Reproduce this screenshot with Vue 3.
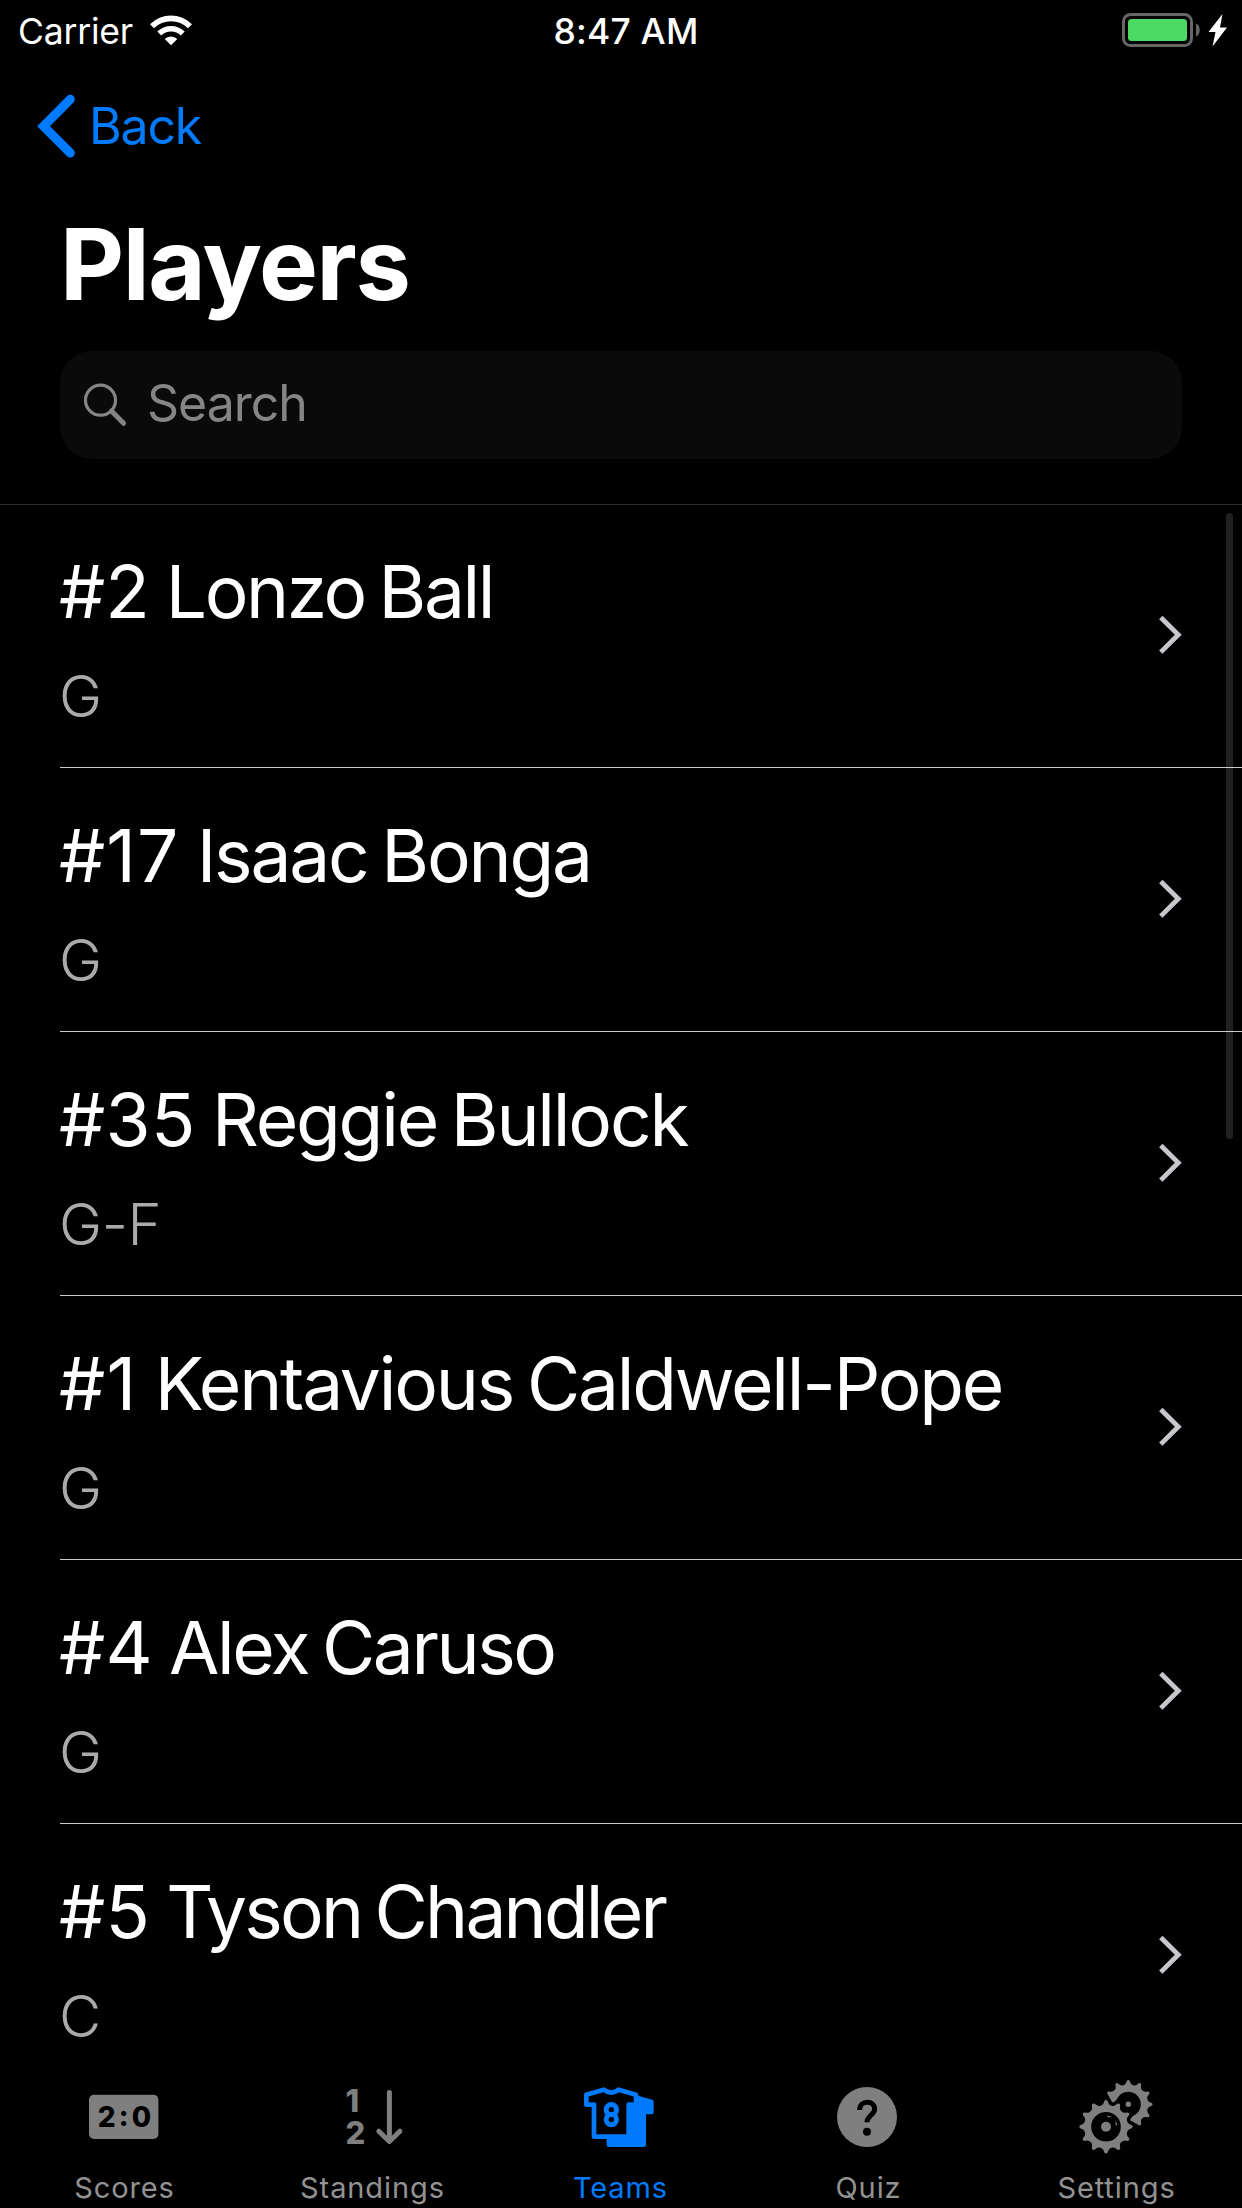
<script setup>
// Tracking values are in pixels: one for the jersey number, one for the name.
const players = [
  { number: '#2', name: 'Lonzo Ball', position: 'G', numberTracking: 0, nameTracking: -2.4 },
  { number: '#17', name: 'Isaac Bonga', position: 'G', numberTracking: 1.1, nameTracking: -2.2 },
  { number: '#35', name: 'Reggie Bullock', position: 'G-F', numberTracking: 0.3, nameTracking: -2.2 },
  { number: '#1', name: 'Kentavious Caldwell-Pope', position: 'G', numberTracking: 1.3, nameTracking: -2.2 },
  { number: '#4', name: 'Alex Caruso', position: 'G', numberTracking: 0.2, nameTracking: -2.4 },
  { number: '#5', name: 'Tyson Chandler', position: 'C', numberTracking: 0.2, nameTracking: -2.8 },
]

const tabs = [
  { id: 'scores', label: 'Scores' },
  { id: 'standings', label: 'Standings' },
  { id: 'teams', label: 'Teams' },
  { id: 'quiz', label: 'Quiz' },
  { id: 'settings', label: 'Settings' },
]
const activeTab = 'teams'

// Twelve-toothed gear ring with a round hole, as an even-odd path.
function gear(cx, cy, outer, body, hole) {
  const at = (r, deg) => {
    const a = (deg * Math.PI) / 180
    return `${(cx + r * Math.cos(a)).toFixed(2)} ${(cy + r * Math.sin(a)).toFixed(2)}`
  }
  let d = `M${at(body, -15)}`
  for (let i = 0; i < 12; i++) {
    const c = i * 30
    d += `Q${at(body, c - 7)} ${at(outer - 1.5, c - 4)}`
    d += `Q${at(outer + 1, c)} ${at(outer - 1.5, c + 4)}`
    d += `Q${at(body, c + 7)} ${at(body, c + 15)}`
  }
  d += `ZM${cx + hole} ${cy}A${hole} ${hole} 0 1 0 ${cx - hole} ${cy}A${hole} ${hole} 0 1 0 ${cx + hole} ${cy}Z`
  return d
}
const frontGear = gear(27, 49.7, 27, 21.8, 14.8)
const backGear = gear(49.3, 27.3, 24.6, 19.8, 12.5)
</script>

<template>
  <div class="screen">
    <header class="header">
      <div class="status">
        <div class="status-left">
          <span class="carrier">Carrier</span>
          <svg class="wifi" width="42" height="30" viewBox="0 0 42 30">
            <path d="M0 9.2A30 30 0 0 1 42 9.2L38 13.2A24.4 24.4 0 0 0 4 13.2Z" />
            <path d="M7.3 16.6A19.5 19.5 0 0 1 34.7 16.6L30.8 20.6A14 14 0 0 0 11.2 20.6Z" />
            <path d="M14.7 24A9 9 0 0 1 27.3 24L21 30.2Z" />
          </svg>
        </div>
        <span class="time">8:47 AM</span>
        <div class="status-right">
          <svg width="106" height="34" viewBox="0 0 106 34">
            <rect x="1.5" y="1.5" width="68" height="31" rx="7" fill="none" stroke="#666" stroke-width="3" />
            <rect x="6" y="6" width="59" height="22" rx="3.5" fill="#4cd964" />
            <path d="M74 10.5C79 12 79 22 74 23.5Z" fill="#666" />
            <path d="M100.5 1L86.5 19H93.5L90.5 33.5L105 14.5H98Z" fill="#fff" />
          </svg>
        </div>
      </div>

      <div class="nav">
        <svg width="38" height="64" viewBox="0 0 38 64">
          <path d="M32.3 5.3L5.5 32.2L32.3 59" fill="none" stroke="#007aff" stroke-width="9" stroke-linecap="round" />
        </svg>
        <span class="back">Back</span>
      </div>

      <h1 class="title">Players</h1>

      <div class="search">
        <svg width="43" height="43" viewBox="0 0 43 43" fill="none" stroke="#858585">
          <circle cx="16.5" cy="16.2" r="15" stroke-width="3.2" />
          <path d="M27.5 27L39.6 39.3" stroke-width="5" stroke-linecap="round" />
        </svg>
        <span class="placeholder">Search</span>
      </div>
    </header>

    <main class="list">
      <div v-for="player in players" :key="player.name" class="row">
        <div class="info">
          <div class="name">
            <span :style="{ letterSpacing: player.numberTracking + 'px' }">{{ player.number + ' ' }}</span>
            <span :style="{ letterSpacing: player.nameTracking + 'px' }">{{ player.name }}</span>
          </div>
          <div class="position">{{ player.position }}</div>
        </div>
        <svg class="chevron" width="24" height="40" viewBox="0 0 24 40">
          <path d="M2.8 2.5L20.3 19.8L2.8 37.1" fill="none" stroke="#c7c7cc" stroke-width="4.8" />
        </svg>
      </div>
      <div class="scrollbar"></div>
    </main>

    <nav class="tabs">
      <div v-for="tab in tabs" :key="tab.id" class="tab" :class="{ active: tab.id === activeTab }">
        <svg v-if="tab.id === 'scores'" width="71" height="80" viewBox="0 0 71 80">
          <rect x="0" y="17.7" width="69.4" height="44.3" rx="5" />
          <g class="digits" fill="#000" font-size="28">
            <text x="8.700" y="50">2</text>
            <text x="29.700" y="48.5">:</text>
            <text x="42.700" y="50">0</text>
          </g>
        </svg>
        <svg v-else-if="tab.id === 'standings'" width="54" height="80" viewBox="0 0 54 80">
          <text class="digits" font-size="31"><tspan x="0.5" y="35.3">1</tspan><tspan x="0.5" y="67.3">2</tspan></text>
          <path d="M44.4 15.5V64M33.800 54.2L44.4 64.5L54.900 54.2" fill="none" stroke="currentColor" stroke-width="5" stroke-linecap="round" stroke-linejoin="round" />
        </svg>
        <svg v-else-if="tab.id === 'teams'" width="72" height="80" viewBox="133 51 216 240">
          <path d="M290 106L338 119Q342 121 342 125V157Q342 163 336 163H319V255Q319 261 313 261H207Q201 261 201 255V230H267V134H290Z" />
          <path d="M192 89L140 104V134H163V230H267V134H289V104L237 89Q215 107 192 89Z" fill="none" stroke="currentColor" stroke-width="14" stroke-linejoin="round" />
          <g fill="none" stroke="currentColor" stroke-width="15">
            <circle cx="215" cy="149" r="15.5" />
            <circle cx="215" cy="178.5" r="15.5" />
          </g>
        </svg>
        <svg v-else-if="tab.id === 'quiz'" width="62" height="80" viewBox="891 51 186 240">
          <circle cx="981" cy="171" r="90" />
          <path d="M959 150C959 119 1004 120 1004 147C1004 165 981 166 981 187" fill="none" stroke="#000" stroke-width="15" />
          <circle cx="981" cy="215" r="12" fill="#000" />
        </svg>
        <svg v-else width="74" height="80" viewBox="0 0 74 80">
          <path :d="backGear" fill-rule="evenodd" />
          <circle cx="49.3" cy="27.3" r="2.7" />
          <path :d="frontGear" fill="none" stroke="#000" stroke-width="7" stroke-linejoin="round" />
          <path :d="frontGear" fill-rule="evenodd" />
          <circle cx="27" cy="49.7" r="5" />
        </svg>
        <span class="tab-label">{{ tab.label }}</span>
      </div>
    </nav>
  </div>
</template>

<style>
body {
  background: #000;
}
</style>

<style scoped>
.screen {
  width: 1242px;
  height: 2208px;
  display: flex;
  flex-direction: column;
  overflow: hidden;
  background: #000;
  color: #fff;
  font-family: Inter, Roboto, sans-serif;
  white-space: nowrap;
}
svg {
  display: block;
  flex: none;
  overflow: visible;
}
.header {
  flex: none;
  height: 505px;
  box-sizing: border-box;
  border-bottom: 1px solid #2b2b2b;
}
.status {
  height: 60px;
  display: flex;
  align-items: center;
  padding: 0 14px 0 18px;
}
.status-left,
.status-right {
  flex: 1;
  display: flex;
  align-items: center;
}
.status-left {
  gap: 17px;
}
.status-right {
  justify-content: flex-end;
}
.carrier {
  padding-top: 3px;
  font-size: 35.5px;
  line-height: 57px;
  letter-spacing: -0.2px;
}
.wifi {
  fill: #fff;
}
.time {
  padding: 3px 0 0 6px;
  font-size: 35.5px;
  line-height: 57px;
  font-weight: 540;
  letter-spacing: 0.2px;
}
.nav {
  height: 132px;
  display: flex;
  align-items: center;
  padding: 0 0 0 38px;
  gap: 13px;
}
.back {
  color: #007aff;
  font-size: 50px;
  line-height: 64px;
  letter-spacing: -1.2px;
}
.title {
  margin: 0 0 0 60px;
  height: 159px;
  font-size: 99px;
  font-weight: 700;
  line-height: 144px;
  letter-spacing: -1.4px;
}
.search {
  display: flex;
  align-items: center;
  gap: 20px;
  height: 108px;
  margin: 0 60px;
  padding-left: 24px;
  box-sizing: border-box;
  border-radius: 32px;
  background: #0a0a0a;
  color: #858585;
}
.placeholder {
  padding-bottom: 5px;
  font-size: 50px;
  letter-spacing: -1px;
}
.list {
  position: relative;
  flex: 1;
  min-height: 0;
  margin-top: -1px;
  overflow: hidden;
}
.row {
  display: flex;
  align-items: center;
  height: 264px;
  margin-left: 59px;
  padding-right: 60px;
  box-sizing: border-box;
  background: linear-gradient(#c8c8c8, #c8c8c8) 1px 100% / 100% 1px no-repeat;
}
.info {
  flex: 1;
  padding-top: 15px;
}
.name {
  display: flex;
  font-size: 73px;
  line-height: 104px;
  white-space: pre;
  word-spacing: -4.5px;
}
.position {
  color: #aaa;
  font-size: 58px;
  font-weight: 300;
  line-height: 104px;
  letter-spacing: -0.5px;
}
.chevron {
  margin-bottom: 3px;
}
.scrollbar {
  position: absolute;
  top: 9px;
  right: 9px;
  width: 7px;
  height: 626px;
  border-radius: 4px;
  background: rgba(255, 255, 255, 0.13);
}
.tabs {
  flex: none;
  height: 147px;
  display: flex;
  box-sizing: border-box;
  padding: 16px 2px 0 0;
  background: #000;
}
.tab {
  flex: 1;
  display: flex;
  flex-direction: column;
  align-items: center;
  color: #7f7f7f;
  fill: currentColor;
}
.tab.active {
  color: #007aff;
}
.tab-label {
  margin-top: 11px;
  padding-left: 1px;
  color: #929292;
  font-size: 29px;
  font-weight: 430;
  line-height: 40px;
  letter-spacing: 0.9px;
}
.active .tab-label {
  color: #007aff;
}
.digits {
  font-weight: 800;
}
</style>
